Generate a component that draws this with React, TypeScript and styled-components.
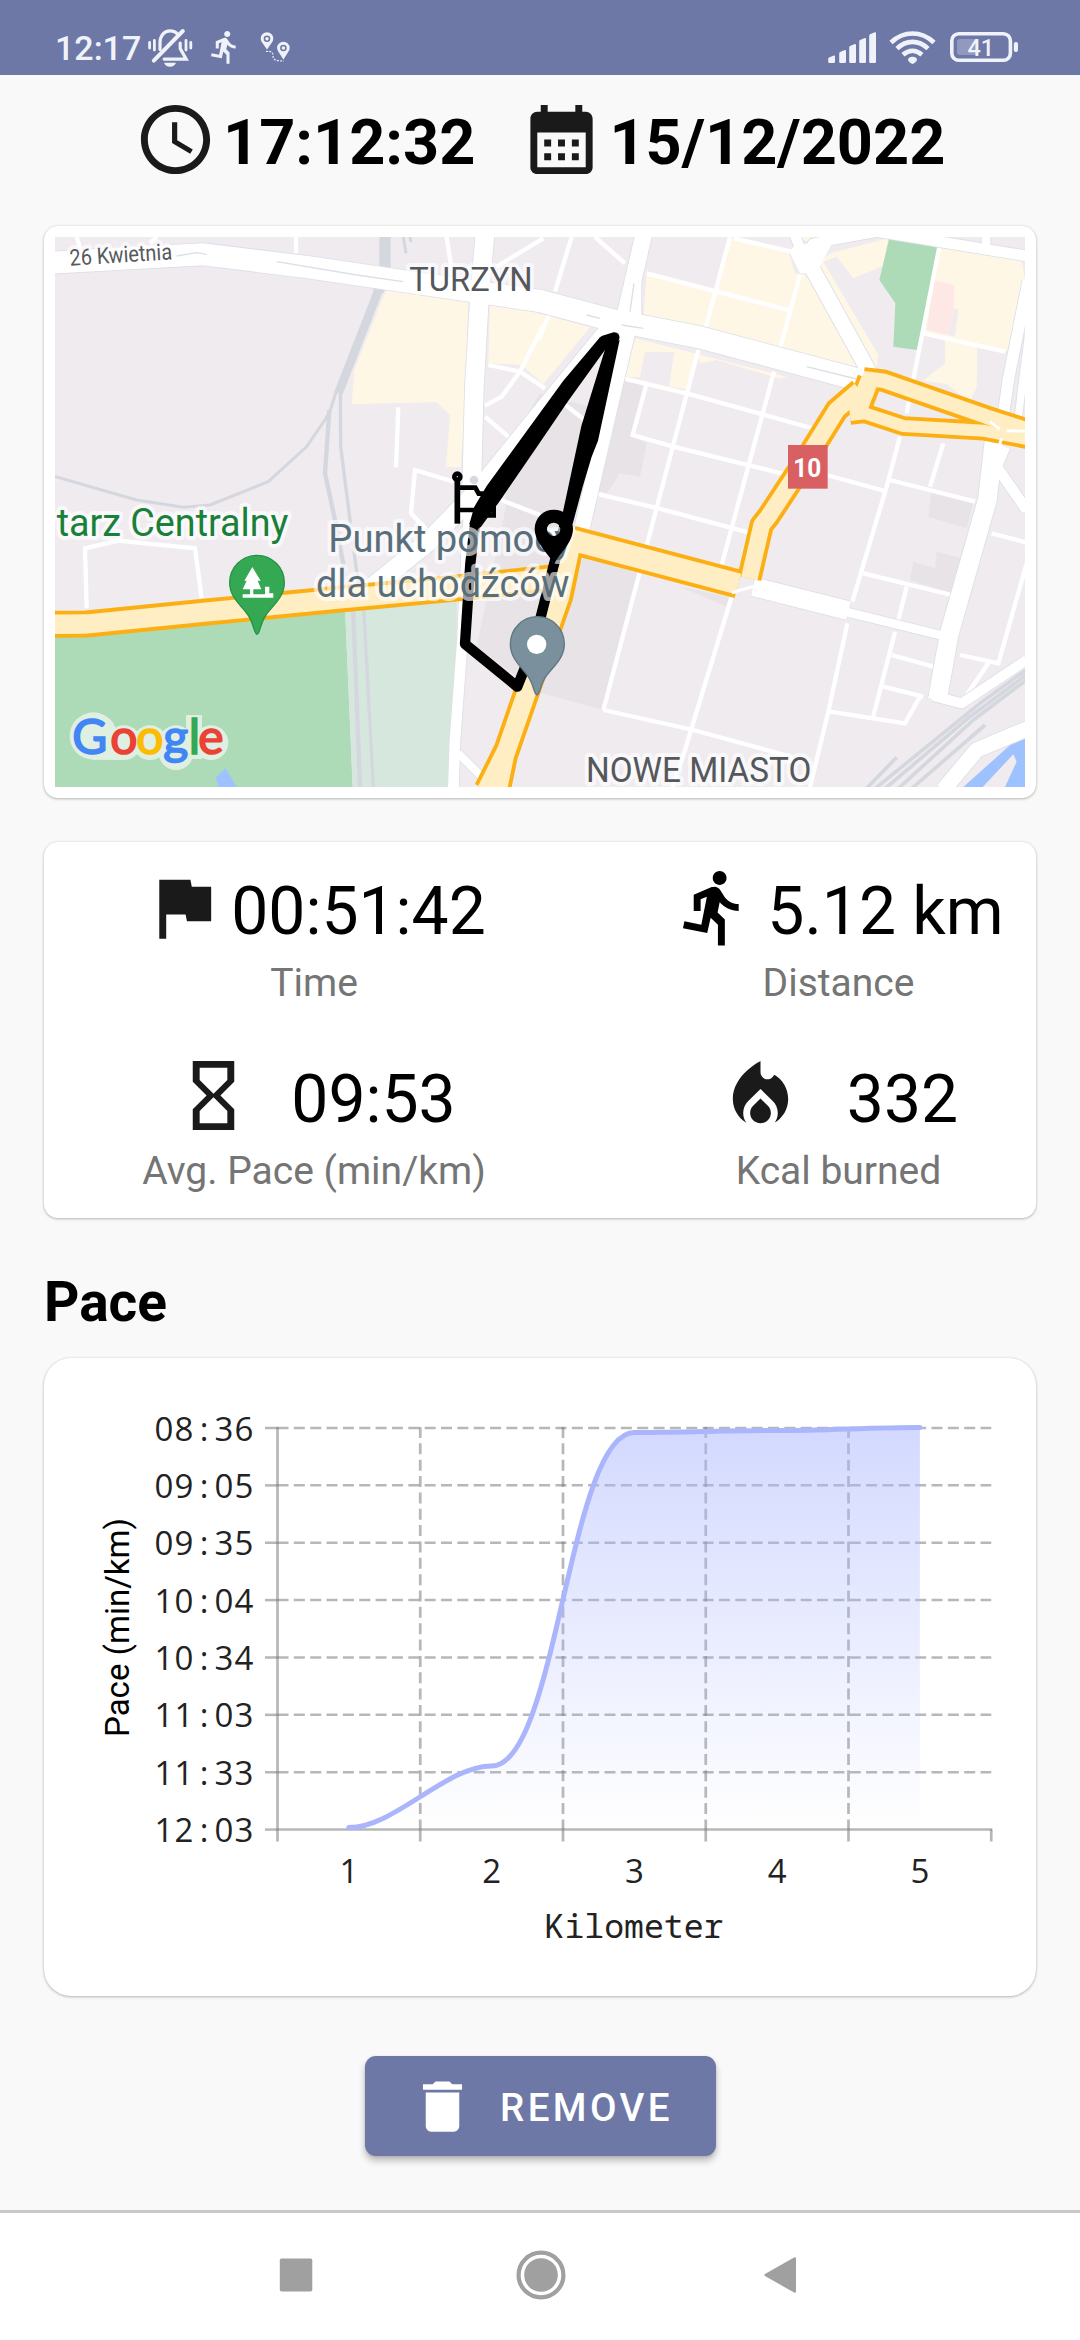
import React from "react";
import styled, { createGlobalStyle } from "styled-components";

const GlobalStyle = createGlobalStyle`
  *, *::before, *::after { box-sizing: border-box; }
  html, body { margin: 0; padding: 0; background: #f9f9f9; }
  body { font-family: Roboto, "Noto Sans", sans-serif; color: #000; }
  svg { display: block; flex: none; }
`;

const Screen = styled.div`
  width: 1080px;
  height: 2340px;
  display: flex;
  flex-direction: column;
  background: #f9f9f9;
  overflow: hidden;
`;

/* ---------- status bar ---------- */

const StatusBar = styled.header`
  height: 75px;
  flex: none;
  display: flex;
  align-items: flex-start;
  justify-content: space-between;
  padding: 20px 62px 0 55px;
  background: #6e78a7;
  color: #f0f2fa;
`;

const StatusGroup = styled.div<{ $gap: number }>`
  display: flex;
  align-items: flex-start;
  gap: ${(p) => p.$gap}px;
`;

const StatusClock = styled.span`
  width: 75px;
  font-size: 34px;
  font-weight: 500;
  line-height: 57px;
  white-space: nowrap;
`;

/* ---------- date and time ---------- */

const Header = styled.section`
  height: 83px;
  flex: none;
  margin: 23px 0 45px 134px;
  display: flex;
  gap: 45px;
`;

const HeaderItem = styled.div`
  display: flex;
  gap: 6px;
`;

const HeaderText = styled.span`
  font-size: 63px;
  font-weight: 700;
  line-height: 89px;
  white-space: nowrap;
`;

/* ---------- cards ---------- */

const Card = styled.section<{ $height: number; $radius: number; $gap: number }>`
  width: 992px;
  height: ${(p) => p.$height}px;
  flex: none;
  margin: 0 44px ${(p) => p.$gap}px;
  border-radius: ${(p) => p.$radius}px;
  background: #fff;
  box-shadow: 0 1px 3px rgba(0, 0, 0, 0.26), 0 0 2px rgba(0, 0, 0, 0.1);
`;

const MapCard = styled(Card)`
  padding: 11px;
`;

const StatsCard = styled(Card)`
  padding-top: 24px;
  display: grid;
  grid-template-columns: 540px 395px;
  grid-auto-rows: 188px;
  column-gap: 57px;
`;

const Stat = styled.div`
  display: flex;
  flex-direction: column;
  align-items: center;
`;

const StatRow = styled.div<{ $gap: number }>`
  height: 91px;
  display: flex;
  gap: ${(p) => p.$gap}px;
`;

const StatValue = styled.span`
  font-size: 66px;
  line-height: 91px;
  white-space: nowrap;
`;

const StatLabel = styled.span`
  margin-top: 4px;
  font-size: 39px;
  line-height: 45px;
  color: #757575;
  white-space: nowrap;
`;

const SectionTitle = styled.h2`
  margin: 8px 0 24px 44px;
  flex: none;
  font-size: 55px;
  font-weight: 700;
  line-height: 64px;
`;

/* ---------- button and navigation ---------- */

const RemoveButton = styled.button`
  width: 351px;
  height: 100px;
  flex: none;
  align-self: flex-start;
  margin-left: 365px;
  padding: 0 0 0 44px;
  display: flex;
  align-items: center;
  gap: 24px;
  border: 0;
  border-radius: 11px;
  background: #6e78a7;
  color: #fff;
  box-shadow: 0 5px 7px rgba(0, 0, 0, 0.24), 0 1px 3px rgba(0, 0, 0, 0.12);
  font-family: inherit;
  font-size: 38.5px;
  font-weight: 500;
  letter-spacing: 3.44px;
  line-height: 46px;
`;

const ButtonLabel = styled.span`
  padding-top: 3px;
`;

const NavBar = styled.nav`
  height: 130px;
  flex: none;
  margin-top: auto;
  padding: 0 283px 3px 279px;
  display: flex;
  align-items: center;
  justify-content: space-between;
  border-top: 3px solid #c8c8c8;
  background: #fff;
`;

/* ---------- icons ---------- */

const PATHS = {
  clock:
    "M11.99 2C6.47 2 2 6.48 2 12s4.47 10 9.99 10C17.52 22 22 17.52 22 12S17.52 2 11.99 2zM12 20c-4.42 0-8-3.58-8-8s3.58-8 8-8 8 3.58 8 8-3.58 8-8 8zm.5-13H11v6l5.25 3.15.75-1.23-4.5-2.67z",
  calendar:
    "M19 4h-1V2h-2v2H8V2H6v2H5c-1.11 0-1.99.9-1.99 2L3 20c0 1.1.89 2 2 2h14c1.1 0 2-.9 2-2V6c0-1.1-.9-2-2-2zm0 16H5V10h14v10zM9 14H7v-2h2v2zm4 0h-2v-2h2v2zm4 0h-2v-2h2v2zm-8 4H7v-2h2v2zm4 0h-2v-2h2v2zm4 0h-2v-2h2v2z",
  flag: "M14.4 6L14 4H5v17h2v-7h5.6l.4 2h7V6z",
  run: "M13.49 5.48c1.1 0 2-.9 2-2s-.9-2-2-2-2 .9-2 2 .9 2 2 2zm-3.6 13.9l1-4.4 2.1 2v6h2v-7.5l-2.1-2 .6-3c1.3 1.5 3.3 2.5 5.5 2.5v-2c-1.9 0-3.5-1-4.3-2.4l-1-1.6c-.4-.6-1-1-1.7-1-.3 0-.5.1-.8.1l-5.2 2.2v4.7h2v-3.4l1.8-.7-1.6 8.1-4.9-1-.4 2 7 1.4z",
  hourglass:
    "M6 2v6h.01L6 8.01 10 12l-4 4 .01.01H6V22h12v-5.99h-.01L18 16l-4-4 4-3.99-.01-.01H18V2H6zm10 14.5V20H8v-3.5l4-4 4 4zm-4-5l-4-4V4h8v3.5l-4 4z",
  fire: "M12 12.9l-2.13 2.09c-.56.56-.87 1.29-.87 2.07C9 18.68 10.35 20 12 20s3-1.32 3-2.94c0-.78-.31-1.52-.87-2.07L12 12.9zM16 6l-.44.55C14.38 8.02 12 7.19 12 5.3V2S4 6 4 13c0 2.92 1.56 5.47 3.89 6.86-.56-.79-.89-1.76-.89-2.8 0-1.32.52-2.56 1.47-3.5L12 10.1l3.53 3.47c.95.93 1.47 2.17 1.47 3.5 0 1.02-.31 1.96-.85 2.75 1.89-1.15 3.29-3.06 3.71-5.3.66-3.55-1.07-6.9-3.86-8.52z",
  trash: "M6 19c0 1.1.9 2 2 2h8c1.1 0 2-.9 2-2V7H6v12zM19 4h-3.5l-1-1h-5l-1 1H5v2h14V4z",
};

function Icon({ name, size = 83, color = "#1a1a1a" }: { name: keyof typeof PATHS; size?: number; color?: string }) {
  return (
    <svg width={size} height={size} viewBox="0 0 24 24" fill={color} aria-hidden="true">
      <path d={PATHS[name]} />
    </svg>
  );
}

const MutedBellIcon = () => (
  <svg width="45" height="55" viewBox="148 20 45 55" fill="none" stroke="currentColor" strokeWidth="3.2" strokeLinecap="round">
    <path d="M149.6 42.5v5.5M154.4 40.5v9.5M186 40.5v9.5M190.8 42.5v5.5" strokeWidth="2.8" />
    <path d="M160 49.5v-6.5c0-7 4-12.2 10-12.2 3.4 0 6 1.3 7.8 3.6" />
    <path d="M180.2 43v5.5l6 10.6h-22" />
    <path d="M153.8 60.6L182.8 31" strokeWidth="4" />
    <path d="M164 62.8h12c-1 2.6-3.2 4-6 4s-5-1.4-6-4z" fill="currentColor" stroke="none" />
  </svg>
);

const RunStatusIcon = () => (
  <svg width="30" height="55" viewBox="211 20 30 55" fill="currentColor">
    <path transform="translate(206.6 28.7) scale(1.53)" d={PATHS.run} />
  </svg>
);

const RoutePinsIcon = () => (
  <svg width="32" height="55" viewBox="259 20 32 55" fill="currentColor">
    <path fillRule="evenodd" d="M267 49.6l-4.5-6.6a6.3 6.3 0 1 1 9 0zM267 35.4a3.3 3.3 0 1 0 0 6.6 3.3 3.3 0 1 0 0-6.6z" />
    <circle cx="267" cy="38.7" r="1.7" />
    <path fillRule="evenodd" d="M283.4 59.6l-4.5-7.2a6.3 6.3 0 1 1 9 0zM283.4 44.7a3.3 3.3 0 1 0 0 6.6 3.3 3.3 0 1 0 0-6.6z" />
    <circle cx="283.4" cy="48" r="1.7" />
    <path d="M266 51.5c5-.5 7 .5 7 4s1 5.5 11 5.5" fill="none" stroke="currentColor" strokeWidth="1.2" strokeDasharray="2 1.3" />
  </svg>
);

const SignalIcon = () => (
  <svg width="49" height="55" viewBox="827 20 49 55" fill="currentColor">
    {[55.5, 50, 44, 38, 32.3].map((top, i) => {
      const x = [827.2, 838.2, 848.2, 858.2, 868.2][i];
      return <path key={top} d={`M${x} ${top + 3.4}q0-1 .8-1.5l4.8-1.9q1.2-.3 1.2 1V61.8q0 1.2-1.2 1.2h-4.4q-1.2 0-1.2-1.2z`} />;
    })}
  </svg>
);

const WifiIcon = () => (
  <svg width="47" height="55" viewBox="887 20 47 55" fill="none" stroke="currentColor" strokeWidth="4.6">
    <path d="M889 42.5c12.5-12 30.5-12 43 0" />
    <path d="M895 48.6c9.3-9 21.7-9 31 0" />
    <path d="M901 54.8c6-5.4 13-5.4 19 0" />
    <path d="M906 60c0-4.4 9-4.4 9 0 0 1-3.4 4-4.5 4s-4.5-3-4.5-4z" fill="currentColor" stroke="none" />
  </svg>
);

const BatteryText = styled.text`
  font-family: Roboto, sans-serif;
  font-size: 23.5px;
  font-weight: 500;
`;

const BatteryIcon = () => (
  <svg width="70" height="55" viewBox="947 20 70 55" fill="currentColor">
    <rect x="950.8" y="33.7" width="58.6" height="26.6" rx="7" fill="none" stroke="currentColor" strokeWidth="3.6" />
    <rect x="956" y="39" width="21" height="16" rx="3" opacity=".28" />
    <rect x="1012.8" y="42" width="4.2" height="10" rx="2" />
    <BatteryText x="966.5" y="56">41</BatteryText>
  </svg>
);

/* ---------- map ---------- */

const MapLabel = styled.text<{ $size: number; $color: string; $weight?: number }>`
  font-family: Roboto, sans-serif;
  font-size: ${(p) => p.$size}px;
  font-weight: ${(p) => p.$weight ?? 400};
  fill: ${(p) => p.$color};
  stroke: rgba(255, 255, 255, 0.64);
  stroke-width: ${(p) => (p.$weight ? 0 : 24)}px;
  stroke-linejoin: round;
  paint-order: stroke;
`;

const LogoText = styled.text`
  font-family: Lato, sans-serif;
  font-size: 144px;
  font-weight: 400;
  stroke-width: 5px;
`;

const MINOR = [
  "M110 51L120 85M768 51V100M1220 51L1235 150M1510 55L1370 140M330 70L350 51",
  "M1075 562L1068 742M1240 785L1125 750L1113 880L1165 935",
  "M1345 435L1440 455L1508 320M1440 455L1385 530L1335 557M1440 455L1515 505M1335 590L1405 650M1370 835L1500 885",
  "M1595 51L1545 215M1665 51L1755 130M1820 160L2245 270M2070 51L1995 330M2080 55L2255 95M2280 165L2220 385M1527 285L1495 360",
  "M1975 390L1690 1470M2202 455L2045 1035M2075 1130L1935 1590L1895 1710",
  "M1750 475L1940 520L2335 630M1820 490L1778 645L1900 680L2245 765M2360 765L2535 813M1665 820L1855 865L2125 937",
  "M2702 60L2600 580M2580 650L2540 800L2437 1145M2650 340L2895 395M2710 670L2670 800M2550 780L2805 845M1570 550L1640 605",
  "M2470 1060L2735 1125M2600 1100L2575 1200M2855 940L2960 968M2960 1030L2875 1330L2760 1305M2845 1330L2780 1425",
  "M2422 1210L2365 1475L2310 1701M2565 1235L2498 1497M2555 1305L2680 1340M2530 1400L2650 1430M2370 1475L2595 1510L2640 1430",
  "M1690 1470L1960 1530L2260 1612M140 1165L135 985L235 962L465 985L485 1135",
].join("");

const WIDE: [string, number][] = [
  ["M40 128L230 117L490 103L800 141L1100 185L1500 243L1715 300L1980 352L2470 483", 66],
  ["M1335 40L1318 240L1303 500L1295 800", 56],
  ["M1293 780L1280 1000L1268 1250L1245 1560L1240 1710", 32],
  ["M1715 320L1490 595L1325 800L1160 970L985 1110", 56],
  ["M1812 40L1752 300", 50],
  ["M1788 150L1788 320", 32],
  ["M1762 340L1710 560L1618 960", 46],
  ["M2262 40L2290 110L2320 70L2540 30", 30],
  ["M2286 95L2308 130L2490 460", 46],
  ["M2520 36L2960 108", 32],
  ["M2838 40V80", 26],
  ["M2965 180L2905 480L2885 620", 34],
  ["M2965 350L2935 590", 22],
  ["M2865 640L2842 840L2728 1240L2692 1440", 56],
  ["M2895 680L2870 740L2960 870", 32],
  ["M2140 1100L2425 1172", 56],
  ["M2420 1176L2720 1250", 26],
  ["M2680 1428L2765 1450L2960 1320", 30],
  ["M2965 1525L2810 1590L2710 1710", 46],
  ["M1255 1600L1340 1685", 24],
];

const HIGHWAY: [string, number][] = [
  ["M30 1213L140 1212L500 1176L900 1137L1240 1105L1570 1070", 68],
  ["M1595 960L2095 1092", 74],
  ["M2128 1075L2165 915L2185 890L2300 715L2390 570L2460 510", 60],
  ["M1598 950L1560 1130L1490 1330L1400 1590L1340 1710", 66],
  ["M1410 1590L1385 1710", 42],
  ["M2470 475L2530 482L2840 590L2965 630", 54],
  ["M2430 585L2475 580L2590 618L2830 632L2965 658", 46],
  ["M2490 478L2450 580", 64],
];

function RouteMap() {
  return (
    <svg width="970" height="550" viewBox="45 51 2910 1650" preserveAspectRatio="none">
      <rect x="45" y="51" width="2910" height="1650" fill="#efebef" />
      <g fill="#e7e3e7">
        <path d="M1650 560L1500 520L1380 720L1400 850L1310 1280L1430 1370L1560 960L1640 620z" />
        <path d="M1750 480L1820 500L1775 650L1820 670L1800 770L1740 760L1700 820L1665 810z" />
        <path d="M2675 810L2800 850L2780 925L2665 890zM2690 995L2765 1015L2735 1120L2610 1080L2620 1025L2685 1045z" />
        <path d="M1630 1010L1795 1060L1690 1470L1490 1415L1560 1220zM1920 1100L2070 1130L2060 1160z" />
      </g>
      <g fill="#fff7e6">
        <path d="M1040 205L1285 235L1275 560L1262 742L1218 742L1230 585L1190 547L935 552L943 450z" />
        <path d="M1350 240L1650 322L1510 492L1445 435L1345 430z" />
        <path d="M1820 165L2025 215L2070 55L2245 95L2265 160L2310 165L2450 440L1810 290z" />
        <path d="M2265 51H2370L2300 64z" />
        <path d="M1785 355L2240 470L2220 476L2030 420L1980 430L1970 400L1940 507L1888 500L1902 396L1815 395L1800 472L1752 470z" />
        <path d="M2370 100L2545 55L2530 137L2440 175L2390 110L2350 125L2515 405L2510 445L2325 140z" />
        <path d="M2695 75L2945 120L2955 180L2900 395L2655 335z" />
        <path d="M2715 350L2812 380L2810 500L2790 545L2720 492L2650 482L2715 430z" />
      </g>
      <path d="M2680 180L2743 195L2740 280L2725 345L2660 330z" fill="#fde8e6" />
      <path d="M2743 265L2755 268L2745 350L2725 345z" fill="#efebef" />
      <path d="M2550 45L2697 68L2670 240L2630 390L2560 380L2566 250L2518 180z" fill="#aedbb7" />
      <path d="M45 1240L915 1160L938 1701H45z" fill="#aedbb7" />
      <path d="M915 1160L1250 1130L1250 1340L1225 1701H938z" fill="#d6e7de" />
      <path d="M527 1673L557 1645L590 1701H535z" fill="#9dc2ff" />
      <path d="M2955 1535L2770 1701H2955z" fill="#9dc2ff" />
      <path d="M2828 1701L2920 1603L2930 1625L2895 1701z" fill="#efebef" />

      <g fill="none" stroke="#d5d7df" strokeLinejoin="round">
        <path d="M1035 40V140L1015 215" strokeWidth="34" />
        <path d="M1020 200L895 520" strokeWidth="26" />
        <path d="M890 510L868 580L800 680L685 785L510 855L430 862L290 840L40 768" strokeWidth="9" />
        <path d="M868 570L855 760L885 900L915 1060L940 1180L960 1701" strokeWidth="13" />
        <path d="M901 510L902 680L930 900L948 1040L972 1180L1000 1701" strokeWidth="10" />
        <path d="M1090 51L1098 100M1110 51L1113 66" strokeWidth="9" />
        <path d="M2965 1345L2820 1450L2500 1710M2965 1360L2790 1490L2530 1710M2965 1375L2800 1500L2570 1710M2835 1515L2610 1710M2570 1612L2480 1705" strokeWidth="11" />
      </g>

      <path d={MINOR} fill="none" stroke="#fff" strokeWidth="13" />
      <g fill="none" strokeLinejoin="round">
        {WIDE.map(([d, w]) => (
          <path key={d} d={d} stroke="#dcdfe8" strokeWidth={w + 5} />
        ))}
        {WIDE.map(([d, w]) => (
          <path key={d} d={d} stroke="#fff" strokeWidth={w} />
        ))}
      </g>
      <path d="M2248 95L2265 75L2380 62L2335 150L2310 160H2280z" fill="#fff" />
      <g fill="none" stroke="#dcdfe8" strokeWidth="4">
        <path d="M410 108L470 98L500 103M710 125L950 165L1090 185M1640 285L1680 295M1745 315L1810 325M2300 440L2450 477M1770 275L1782 190" />
      </g>

      <g fill="none" strokeLinejoin="round">
        {HIGHWAY.map(([d, w]) => (
          <path key={d} d={d} stroke="#fbaf13" strokeWidth={w + 13} />
        ))}
        {HIGHWAY.map(([d, w]) => (
          <path key={d} d={d} stroke="#ffedc3" strokeWidth={w - 10} />
        ))}
      </g>
      <path d="M2850 605L2880 628M2900 632L2955 634M2885 655L2870 700M2075 1118L2140 1100L2190 1118M2150 1098L2240 1120" stroke="#fff" strokeWidth="9" fill="none" />
      <rect x="2244" y="675" width="119" height="131" fill="#d85f62" />
      <MapLabel x="2260" y="770" textLength="84" lengthAdjust="spacingAndGlyphs" $size={76} $color="#fff" $weight={700}>10</MapLabel>

      <circle cx="1302" cy="780" r="13" fill="#d9d7df" />
      <g transform="translate(1140 300)" strokeLinejoin="round">
        <path d="M540 52L565 76L445 242L350 382L240 542L176 630L148 612L163 560L200 498L430 182z" />
        <path d="M560 72L599 60L534 362L515 410L488 500L458 612L424 602L430 570L484 318z" />
        <path d="M552 62L583 52" stroke="#000" strokeWidth="31" strokeLinecap="round" />
        <path
          d="M166 605L151 730L135 972L292 1100L320 1030L345 960L400 740L438 600"
          fill="none"
          stroke="#000"
          strokeWidth="31"
        />
      </g>
      <g fill="none" stroke="#000" strokeWidth="14">
        <circle cx="1252" cy="770" r="9" />
        <path d="M1252 780V911" strokeWidth="17" />
        <path d="M1258 803H1306L1316 821H1361V886H1322L1310 870H1258" />
      </g>

      <g>
        <MapLabel x="90" y="137" transform="rotate(-3.6 90 137)" textLength="308" lengthAdjust="spacingAndGlyphs" $size={68} $color="#56595c">26 Kwietnia</MapLabel>
        <MapLabel x="1108" y="213" textLength="370" lengthAdjust="spacingAndGlyphs" $size={101} $color="#54585b">TURZYN</MapLabel>
        <MapLabel x="1638" y="1685" textLength="676" lengthAdjust="spacingAndGlyphs" $size={103} $color="#54585b">NOWE MIASTO</MapLabel>
        <MapLabel x="50" y="948" textLength="695" lengthAdjust="spacingAndGlyphs" $size={117} $color="#188038">tarz Centralny</MapLabel>
        <MapLabel x="865" y="997" textLength="732" lengthAdjust="spacingAndGlyphs" $size={118} $color="#586f7b">Punkt pomocy</MapLabel>
        <MapLabel x="828" y="1132" textLength="760" lengthAdjust="spacingAndGlyphs" $size={118} $color="#586f7b">dla uchodźców</MapLabel>
      </g>

      <path
        fillRule="evenodd"
        d="M1542 1034C1531 1005 1484 970 1484 926a57.500 57 0 1 1 115 0C1599 970 1553 1005 1542 1034zM1541 908a20 20 0 1 0 0 40a20 20 0 1 0 0-40z"
      />
      <g transform="translate(651 1088)">
        <path d="M0 155C-10 152-9 122-27 97C-47 68-82 44-82 0A82 82 0 1 1 82 0C82 44 47 68 27 97C9 122 10 152 0 155z" fill="#34a853" stroke="#259345" strokeWidth="4" />
        <path
          transform="translate(-651 -248)"
          fill="#fff"
          d="M637 201L662 242H653L664 268H640V283H675V260H688V280H700V293H608V283H630V268H608L620 242H613z"
        />
      </g>
      <g transform="translate(1491 1272)">
        <path d="M0 153C-10 150-9 122-27 97C-47 68-80 44-80 0A81 82 0 1 1 82 0C82 44 47 68 27 97C9 122 10 150 0 153z" fill="#7a909c" stroke="#5f7784" strokeWidth="4" />
        <circle cx="-1" cy="1" r="29" fill="#fff" />
      </g>

      <g transform="translate(0 840)">
        <g fill="#dff0e2">
          <circle cx="160" cy="708" r="71" />
          <circle cx="252" cy="728" r="52" />
          <circle cx="330" cy="728" r="52" />
          <circle cx="408" cy="728" r="52" />
          <circle cx="408" cy="758" r="52" />
          <rect x="438" y="645" width="48" height="132" />
          <circle cx="513" cy="728" r="52" />
          <path d="M160 640L218 668L190 700L250 720V780L160 779z" />
        </g>
        <LogoText y="761">
          <tspan x="97" fill="#4285f4" stroke="#4285f4">G</tspan>
          <tspan x="211" fill="#ea4335" stroke="#ea4335">o</tspan>
          <tspan x="289" fill="#fbbc05" stroke="#fbbc05">o</tspan>
          <tspan x="370" fill="#4285f4" stroke="#4285f4">g</tspan>
          <tspan x="446" fill="#34a853" stroke="#34a853">l</tspan>
          <tspan x="475" fill="#ea4335" stroke="#ea4335">e</tspan>
        </LogoText>
      </g>
    </svg>
  );
}

/* ---------- chart ---------- */

const AxisDigits = styled.text`
  font-family: "Open Sans", "Noto Sans", sans-serif;
  font-size: 33px;
  fill: #222;
  text-anchor: middle;
`;

const AxisTitle = styled.text<{ $mono?: boolean }>`
  font-family: ${(p) => (p.$mono ? '"Noto Sans Mono", "DejaVu Sans Mono", monospace' : "Roboto, sans-serif")};
  font-size: 33px;
  fill: ${(p) => (p.$mono ? "#222" : "#000")};
`;

const PACES = ["08:36", "09:05", "09:35", "10:04", "10:34", "11:03", "11:33", "12:03"];
const POINTS = [1827.5, 1766, 1432.5, 1430.5, 1427.5];
const LEFT = 277.5;
const TOP = 1428;
const ROW = 57.37;
const COL = 142.75;
const BOTTOM = TOP + ROW * 7;
const RIGHT = LEFT + COL * 5;

/* share of a column that each segment's handles reach over */
const HANDLES = [0.32, 0.46, 0.33, 0.33];

const pointX = (i: number) => LEFT + COL * (i + 0.5);

const curve = POINTS.reduce((d, y, i) => {
  if (i === 0) return `M${pointX(0)} ${y}`;
  const reach = COL * HANDLES[i - 1];
  return `${d}C${pointX(i - 1) + reach} ${POINTS[i - 1]} ${pointX(i) - reach} ${y} ${pointX(i)} ${y}`;
}, "");

function PaceChart() {
  return (
    <svg width="992" height="638" viewBox="44 1358 992 638">
      <defs>
        <linearGradient id="pace-fill" x1="0" y1={TOP} x2="0" y2={BOTTOM} gradientUnits="userSpaceOnUse">
          <stop offset="0" stopColor="#aab6fe" stopOpacity=".52" />
          <stop offset="1" stopColor="#aab6fe" stopOpacity="0" />
        </linearGradient>
      </defs>
      <g stroke="#707070" strokeOpacity=".5" fill="none">
        <g strokeWidth="2.5">
          {PACES.slice(0, 7).map((p, i) => (
            <path key={p} d={`M${LEFT} ${TOP + ROW * i}H${RIGHT}`} strokeDasharray="11 5.35" />
          ))}
          {PACES.map((p, i) => (
            <path key={p} d={`M265 ${TOP + ROW * i}H${LEFT}`} />
          ))}
          <path d={`M${LEFT} ${BOTTOM}H${RIGHT + 1}`} />
        </g>
        <g strokeWidth="2.7">
          <path d={`M${LEFT} ${TOP - 1}V1841.5`} />
          {[1, 2, 3, 4].map((i) => (
            <path key={i} d={`M${LEFT + COL * i} ${TOP - 1}V${BOTTOM}`} strokeDasharray="11 5.35" />
          ))}
          {[1, 2, 3, 4, 5].map((i) => (
            <path key={i} d={`M${LEFT + COL * i} ${BOTTOM}V1841.5`} />
          ))}
        </g>
      </g>
      <path d={`${curve}V${BOTTOM}H${pointX(0)}z`} fill="url(#pace-fill)" />
      <path d={curve} fill="none" stroke="#aab5fb" strokeWidth="5" strokeLinecap="round" />
      {PACES.map((p, i) => (
        <AxisDigits key={p} x="164 184 204 224 244" y={TOP + ROW * i + 12.6}>
          {p}
        </AxisDigits>
      ))}
      {POINTS.map((_, i) => (
        <AxisDigits key={i} x={pointX(i)} y="1883">
          {i + 1}
        </AxisDigits>
      ))}
      <AxisTitle $mono x="544.5" y="1937.5" textLength="179" lengthAdjust="spacingAndGlyphs">Kilometer</AxisTitle>
      <AxisTitle transform="translate(129 1737) rotate(-90)" textLength="219" lengthAdjust="spacingAndGlyphs">Pace (min/km)</AxisTitle>
    </svg>
  );
}

/* ---------- page ---------- */

const STATS: { icon: keyof typeof PATHS; color?: string; value: string; label: string; gap: number }[] = [
  { icon: "flag", value: "00:51:42", label: "Time", gap: 6 },
  { icon: "run", color: "#000", value: "5.12 km", label: "Distance", gap: 11 },
  { icon: "hourglass", value: "09:53", label: "Avg. Pace (min/km)", gap: 36 },
  { icon: "fire", value: "332", label: "Kcal burned", gap: 45 },
];

const Spacer = styled.div`
  height: 60px;
  flex: none;
`;

export default function App() {
  return (
    <>
      <GlobalStyle />
      <Screen>
        <StatusBar>
          <StatusGroup $gap={18}>
            <StatusClock>12:17</StatusClock>
            <MutedBellIcon />
            <RunStatusIcon />
            <RoutePinsIcon />
          </StatusGroup>
          <StatusGroup $gap={12}>
            <SignalIcon />
            <WifiIcon />
            <BatteryIcon />
          </StatusGroup>
        </StatusBar>

        <Header>
          <HeaderItem>
            <Icon name="clock" />
            <HeaderText>17:12:32</HeaderText>
          </HeaderItem>
          <HeaderItem>
            <Icon name="calendar" />
            <HeaderText>15/12/2022</HeaderText>
          </HeaderItem>
        </Header>

        <MapCard $height={572} $radius={14} $gap={44}>
          <RouteMap />
        </MapCard>

        <StatsCard $height={376} $radius={14} $gap={44}>
          {STATS.map((s) => (
            <Stat key={s.label}>
              <StatRow $gap={s.gap}>
                <Icon name={s.icon} color={s.color} />
                <StatValue>{s.value}</StatValue>
              </StatRow>
              <StatLabel>{s.label}</StatLabel>
            </Stat>
          ))}
        </StatsCard>

        <SectionTitle>Pace</SectionTitle>

        <Card $height={638} $radius={27} $gap={0}>
          <PaceChart />
        </Card>

        <Spacer />
        <RemoveButton type="button">
          <Icon name="trash" size={67} color="#fff" />
          <ButtonLabel>REMOVE</ButtonLabel>
        </RemoveButton>

        <NavBar>
          <svg width="34" height="34" viewBox="0 0 34 34">
            <rect x=".8" y=".5" width="32.5" height="33" rx="1.8" fill="#a0a0a0" />
          </svg>
          <svg width="55" height="50" viewBox="-5 0 55 50">
            <circle cx="25" cy="25" r="22.4" fill="none" stroke="#a0a0a0" strokeWidth="4.2" />
            <circle cx="25" cy="25" r="16.8" fill="#a0a0a0" />
          </svg>
          <svg width="34" height="38" viewBox="0 0 34 38">
            <path d="M2 18L31 1.5Q33 .6 33 2.5V35.5Q33 37.4 31 36.5L2 20Q.6 19 2 18z" fill="#a0a0a0" />
          </svg>
        </NavBar>
      </Screen>
    </>
  );
}
